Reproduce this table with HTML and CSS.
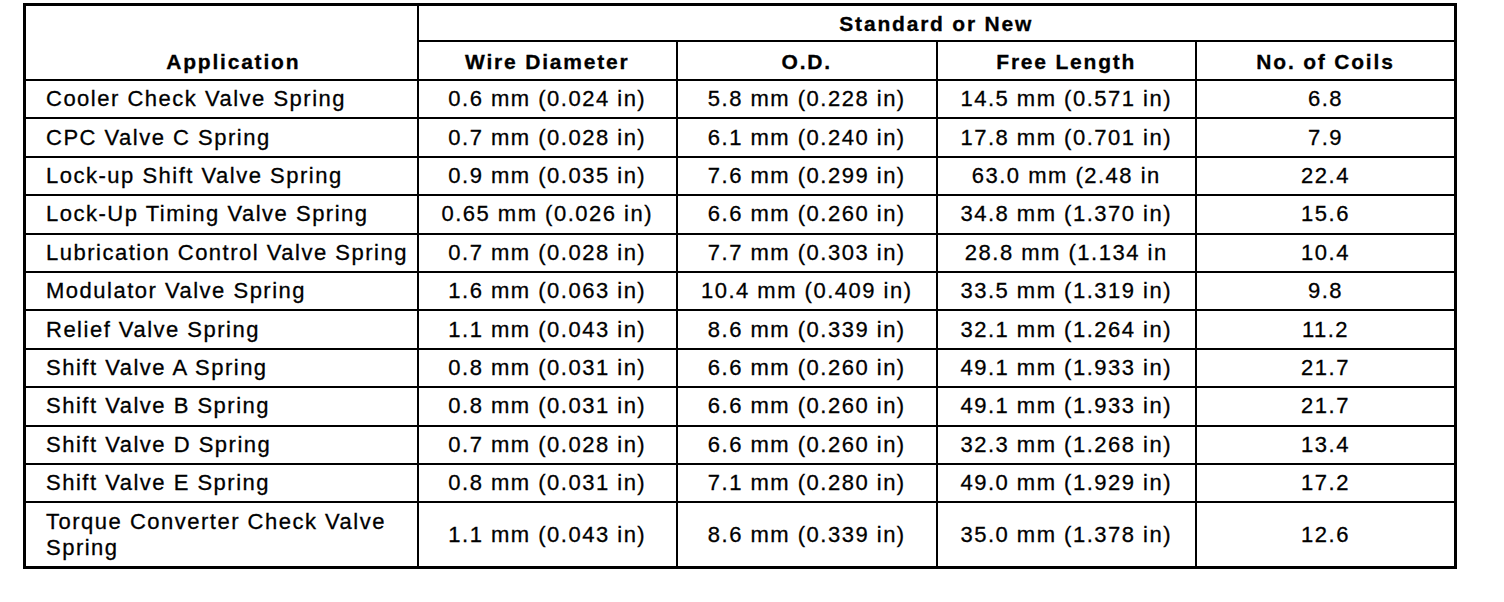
FILE: index.html
```html
<!DOCTYPE html>
<html lang="en">
<head>
    <meta charset="UTF-8">
    <meta name="viewport" content="width=device-width, initial-scale=1.0">
    <title>Valve Body Spring Specifications</title>
    <link rel="stylesheet" href="styles.css">
</head>
<body>

<table class="spring-table">
    <colgroup>
        <col class="col-app">
        <col class="col-val">
        <col class="col-val">
        <col class="col-val">
        <col class="col-val">
    </colgroup>
    <thead>
        <tr class="head-top">
            <th rowspan="2" class="app-head">Application</th>
            <th colspan="4">Standard or New</th>
        </tr>
        <tr class="head-sub">
            <th>Wire Diameter</th>
            <th>O.D.</th>
            <th>Free Length</th>
            <th>No. of Coils</th>
        </tr>
    </thead>
    <tbody>
        <tr>
            <td>Cooler Check Valve Spring</td>
            <td>0.6 mm (0.024 in)</td>
            <td>5.8 mm (0.228 in)</td>
            <td>14.5 mm (0.571 in)</td>
            <td>6.8</td>
        </tr>
        <tr>
            <td>CPC Valve C Spring</td>
            <td>0.7 mm (0.028 in)</td>
            <td>6.1 mm (0.240 in)</td>
            <td>17.8 mm (0.701 in)</td>
            <td>7.9</td>
        </tr>
        <tr>
            <td>Lock-up Shift Valve Spring</td>
            <td>0.9 mm (0.035 in)</td>
            <td>7.6 mm (0.299 in)</td>
            <td>63.0 mm (2.48 in</td>
            <td>22.4</td>
        </tr>
        <tr>
            <td>Lock-Up Timing Valve Spring</td>
            <td>0.65 mm (0.026 in)</td>
            <td>6.6 mm (0.260 in)</td>
            <td>34.8 mm (1.370 in)</td>
            <td>15.6</td>
        </tr>
        <tr>
            <td>Lubrication Control Valve Spring</td>
            <td>0.7 mm (0.028 in)</td>
            <td>7.7 mm (0.303 in)</td>
            <td>28.8 mm (1.134 in</td>
            <td>10.4</td>
        </tr>
        <tr>
            <td>Modulator Valve Spring</td>
            <td>1.6 mm (0.063 in)</td>
            <td>10.4 mm (0.409 in)</td>
            <td>33.5 mm (1.319 in)</td>
            <td>9.8</td>
        </tr>
        <tr>
            <td>Relief Valve Spring</td>
            <td>1.1 mm (0.043 in)</td>
            <td>8.6 mm (0.339 in)</td>
            <td>32.1 mm (1.264 in)</td>
            <td>11.2</td>
        </tr>
        <tr>
            <td>Shift Valve A Spring</td>
            <td>0.8 mm (0.031 in)</td>
            <td>6.6 mm (0.260 in)</td>
            <td>49.1 mm (1.933 in)</td>
            <td>21.7</td>
        </tr>
        <tr>
            <td>Shift Valve B Spring</td>
            <td>0.8 mm (0.031 in)</td>
            <td>6.6 mm (0.260 in)</td>
            <td>49.1 mm (1.933 in)</td>
            <td>21.7</td>
        </tr>
        <tr>
            <td>Shift Valve D Spring</td>
            <td>0.7 mm (0.028 in)</td>
            <td>6.6 mm (0.260 in)</td>
            <td>32.3 mm (1.268 in)</td>
            <td>13.4</td>
        </tr>
        <tr>
            <td>Shift Valve E Spring</td>
            <td>0.8 mm (0.031 in)</td>
            <td>7.1 mm (0.280 in)</td>
            <td>49.0 mm (1.929 in)</td>
            <td>17.2</td>
        </tr>
        <tr class="tall-row">
            <td>Torque Converter Check Valve Spring</td>
            <td>1.1 mm (0.043 in)</td>
            <td>8.6 mm (0.339 in)</td>
            <td>35.0 mm (1.378 in)</td>
            <td>12.6</td>
        </tr>
    </tbody>
</table>

</body>
</html>
```

FILE: styles.css
```css
body {
    margin: 0;
    padding: 0;
    background-color: #fff;
    color: #000;
    font-family: "Liberation Sans", Arial, sans-serif;
}
.spring-table {
    margin: 3px 0 0 23px;
    width: 1434px;
    table-layout: fixed;
    border-collapse: collapse;
    border: 3px solid #000;
}
.col-app {
    width: 393px;
}
.spring-table th, .spring-table td {
    border: 2px solid #000;
    padding: 0;
    text-align: center;
    font-size: 22px;
    letter-spacing: 1.5px;
    line-height: 26px;
    -webkit-text-stroke: 0.3px #000;
}
.spring-table th {
    font-weight: bold;
    font-size: 21px;
    letter-spacing: 1.8px;
    padding-top: 2px;
}
.head-top th {
    height: 32px;
}
.head-sub th {
    height: 35px;
}
.app-head {
    vertical-align: bottom;
    padding: 0 0 4px 24px !important;
}
.spring-table td {
    height: 36.4px;
}
.spring-table td:first-child {
    text-align: left;
    padding: 0 4px 0 20px;
}
.tall-row td {
    height: 63px;
}
```
